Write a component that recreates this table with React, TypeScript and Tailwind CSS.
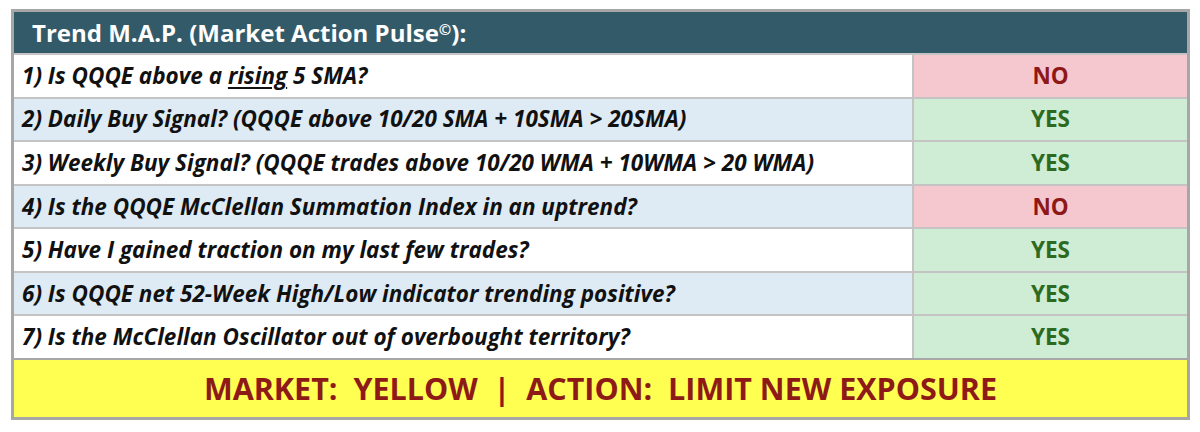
import React from "react";

type Row = { q: React.ReactNode; a: "YES" | "NO" };

const rows: Row[] = [
  {
    q: (
      <>
        {"1) Is QQQE above a "}
        <span className="underline underline-offset-[3px] decoration-[1.5px]">rising</span>
        {" 5 SMA?"}
      </>
    ),
    a: "NO",
  },
  { q: "2) Daily Buy Signal? (QQQE above 10/20 SMA + 10SMA > 20SMA)", a: "YES" },
  { q: "3) Weekly Buy Signal? (QQQE trades above 10/20 WMA + 10WMA > 20 WMA)", a: "YES" },
  { q: "4) Is the QQQE McClellan Summation Index in an uptrend?", a: "NO" },
  { q: "5) Have I gained traction on my last few trades?", a: "YES" },
  { q: "6) Is QQQE net 52-Week High/Low indicator trending positive?", a: "YES" },
  { q: "7) Is the McClellan Oscillator out of overbought territory?", a: "YES" },
];

export default function App() {
  return (
    <div
      className="w-[1200px] h-[432px] bg-white pt-[9px] pl-[11px]"
      style={{ fontFamily: "'Open Sans', Lato, sans-serif" }}
    >
      <div className="w-[1179px] border-[3px] border-[#a7a7a7] flex flex-col">
        <div className="h-[41px] bg-[#335a68] flex items-center pl-[18px] text-white font-bold text-[24px]">
          <span>
            Trend M.A.P. (Market Action Pulse<span className="text-[15px] relative top-[-7px]">©</span>):
          </span>
        </div>
        {rows.map((r, i) => (
          <div
            key={i}
            className={`h-[43.57px] flex border-t-2 border-[#c4c4c4] ${i % 2 === 1 ? "bg-[#deebf4]" : "bg-white"}`}
          >
            <div className="flex-1 flex items-center pl-[8px] font-bold italic text-[22.5px] text-[#111111]">
              <span>{r.q}</span>
            </div>
            <div
              className={`w-[275px] border-l-2 border-[#c4c4c4] flex items-center justify-center font-bold text-[22.5px] ${
                r.a === "NO" ? "bg-[#f5c8cf] text-[#8e1717]" : "bg-[#cfedd4] text-[#2c6a22]"
              }`}
            >
              {r.a}
            </div>
          </div>
        ))}
        <div className="h-[59px] border-t-2 border-[#a7a7a7] bg-[#ffff52] flex items-center justify-center font-bold text-[30.5px] text-[#8e1a17] whitespace-pre">
          {"MARKET:  YELLOW  |  ACTION:  LIMIT NEW EXPOSURE"}
        </div>
      </div>
    </div>
  );
}
